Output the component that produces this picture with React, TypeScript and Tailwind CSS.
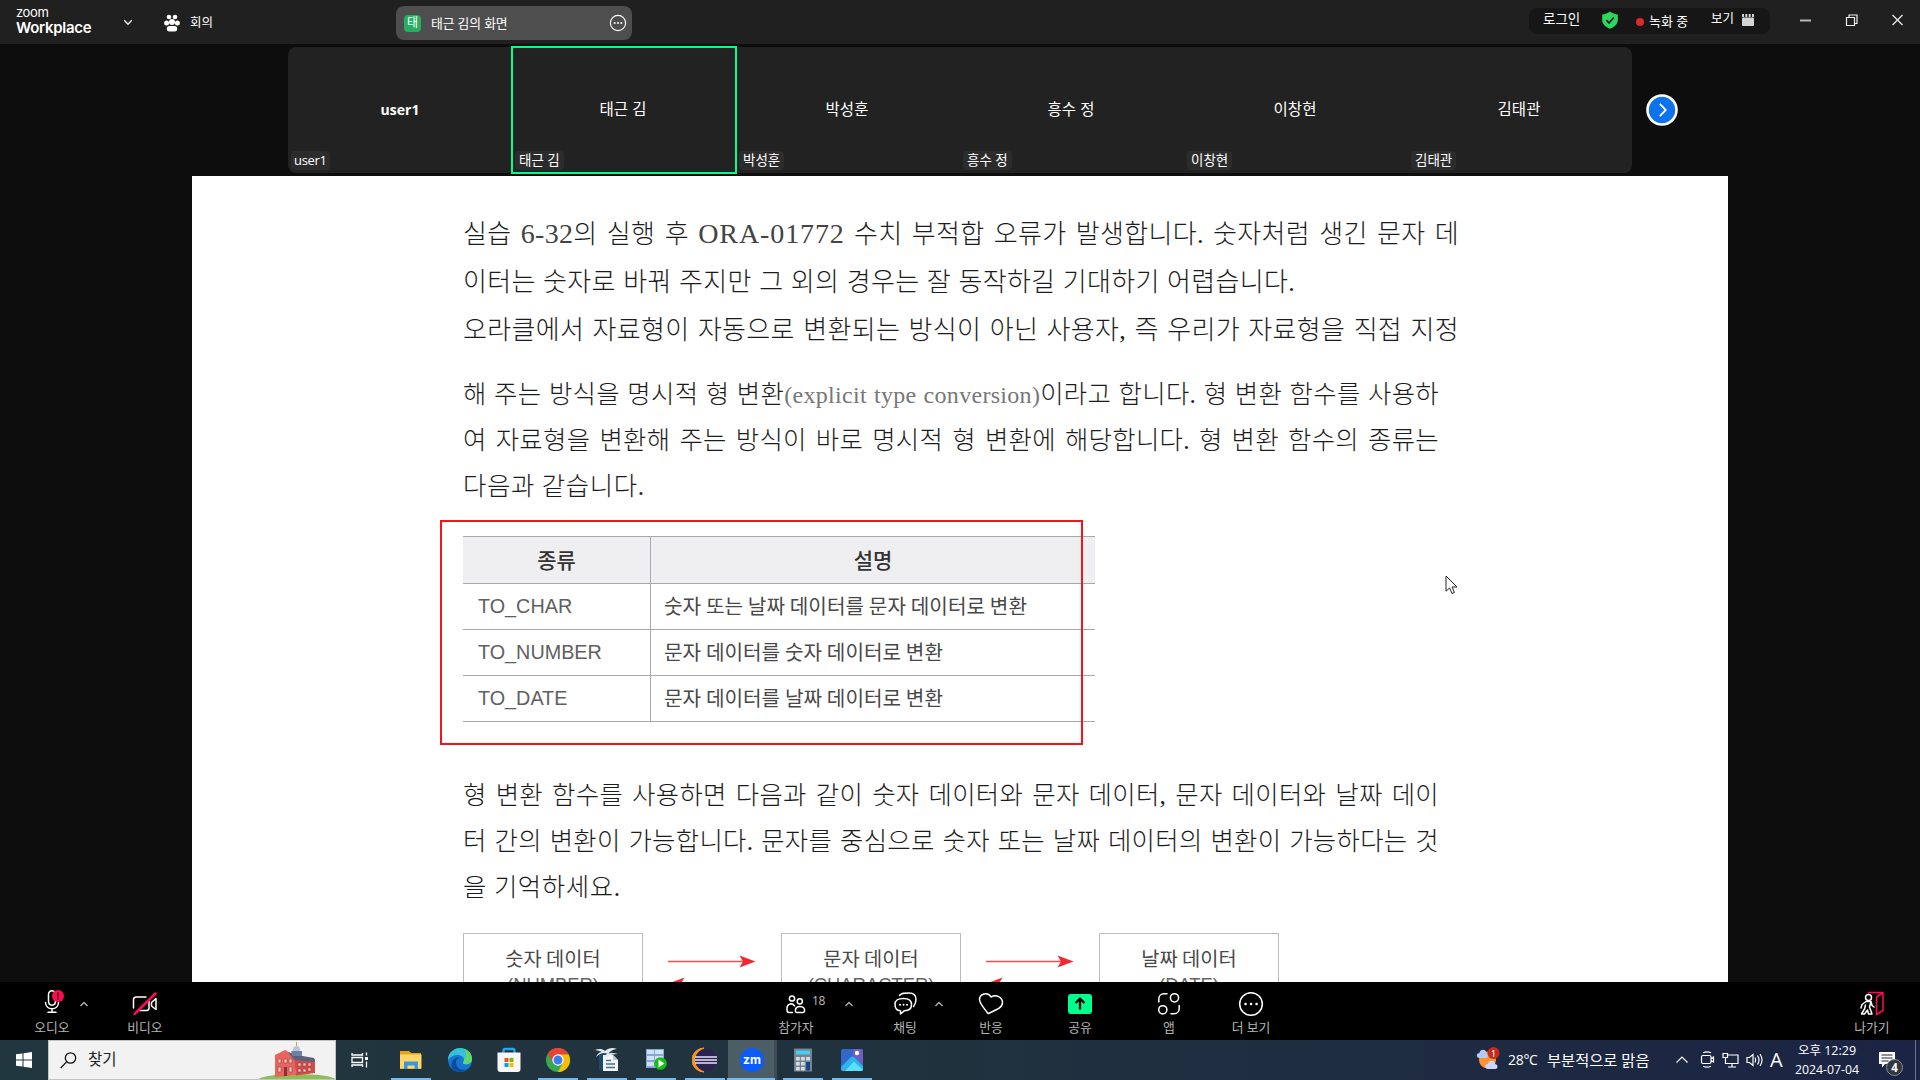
import React from 'react';

const sans = "font-['Open_Sans','Noto_Sans_CJK_KR',sans-serif]";

const participants = [
  { name: 'user1', latin: true, active: false },
  { name: '태근 김', latin: false, active: true },
  { name: '박성훈', latin: false, active: false },
  { name: '흥수 정', latin: false, active: false },
  { name: '이창현', latin: false, active: false },
  { name: '김태관', latin: false, active: false },
];

function TopBar() {
  return (
    <header className="flex h-11 w-full shrink-0 items-start bg-[#202020] text-white">
      <div className="ml-4 mt-[6px] w-[76px] font-['Inter','Liberation_Sans',sans-serif]">
        <div className="text-[13px] leading-[13px] tracking-[-0.4px]">zoom</div>
        <div className="text-[15px] font-semibold leading-[17px] tracking-[-0.3px]">Workplace</div>
      </div>
      <svg className="ml-[31px] mt-[18px]" width="10" height="9" fill="none" stroke="#eee" strokeWidth="1.4">
        <path d="M1.3 2.3 5 6.3 8.7 2.3" />
      </svg>
      <svg className="ml-[31px] mt-[14px]" width="16" height="18" fill="#fff">
        <circle cx="5" cy="3" r="2.3" />
        <circle cx="11" cy="3" r="2.3" />
        <circle cx="2.6" cy="9" r="2.5" />
        <circle cx="13.4" cy="9" r="2.5" />
        <circle cx="8" cy="8" r="3" />
        <rect x="2.8" y="12" width="10.4" height="5.5" rx="2.7" />
      </svg>
      <span className="ml-[10px] mr-px mt-[13px] w-6 text-[12.5px] leading-5">회의</span>
      <div className="ml-[181px] mt-[6px] flex h-[34px] w-[236px] items-center rounded-lg bg-[#4e4e4e] pl-2 pr-[5px]">
        <div className="flex h-[17px] w-[17px] items-center justify-center rounded bg-[#27ae60] text-[12px] leading-none">태</div>
        <span className="ml-[10px] flex-1 text-[12.8px] leading-5 tracking-[-0.1px]">태근 김의 화면</span>
        <svg width="18" height="18" fill="none" stroke="#fff" strokeWidth="1.1">
          <circle cx="9" cy="9" r="7.6" />
          <g fill="#fff" stroke="none">
            <circle cx="5.7" cy="9" r="1" />
            <circle cx="9" cy="9" r="1" />
            <circle cx="12.3" cy="9" r="1" />
          </g>
        </svg>
      </div>
      <div className="ml-auto mt-2 flex h-[26px] w-[241px] items-start rounded-lg bg-[#161616] pl-[14px]">
        <span className="mt-[1px] w-[42px] text-[13.5px] leading-5">로그인</span>
        <svg className="ml-[16px] mt-[3px]" width="18" height="18">
          <path d="M9 .5C11.500 2.500 14 3.200 16.800 3.400V9C16.800 13 13.500 16 9 17.700 4.500 16 1.200 13 1.200 9V3.400C4 3.200 6.500 2.500 9 .5Z" fill="#2bd95a" />
          <path d="M5.300 9.200 8 11.900 12.800 6.500" fill="none" stroke="#123" strokeWidth="1.7" />
        </svg>
        <span className="ml-[17px] mt-[10px] h-2 w-2 rounded-full bg-[#e02828]" />
        <span className="ml-[5px] mt-[3px] w-[48px] whitespace-nowrap text-[13px] leading-5">녹화 중</span>
        <span className="ml-[14px] mt-[1px] w-[24px] text-[12.5px] leading-5">보기</span>
        <svg className="ml-[7px] mt-[6px]" width="12" height="12" fill="#d4d4d4">
          <path d="M0 0h2v3H0zM3.300 0h2v3h-2zM6.700 0h2v3h-2zM10 0h2v3h-2z" />
          <rect y="3.500" width="12" height="8.500" rx="1" />
        </svg>
      </div>
      <svg className="ml-[24px] mr-[10px] mt-[12px]" width="116" height="16" fill="none" stroke="#eee" strokeWidth="1.2">
        <path d="M6 8.500h11" stroke="#b8b8b8" strokeWidth="2" />
        <path d="M52.500 5.500h8v8h-8zM55 5.500v-2.500h8v8.500h-2.500" />
        <path d="M98.500 3 108.500 13M108.500 3 98.500 13" />
      </svg>
    </header>
  );
}

function Strip() {
  return (
    <section className="flex h-[132px] shrink-0 items-start pl-[288px] pt-[3px] text-white">
      <div className="flex h-[126px] w-[1344px] rounded-lg bg-[#222]">
        {participants.map((p) => (
          <div
            key={p.name}
            className={
              p.active
                ? '-m-[1px] flex h-[128px] w-[226px] flex-col border-2 border-[#00ff8c] px-[2px]'
                : 'flex h-[126px] w-[224px] flex-col px-[3px] py-[1px]'
            }
          >
            <div
              className={
                p.latin
                  ? 'mt-[50px] text-center text-[14px] font-bold leading-6'
                  : p.active
                    ? '-ml-[2px] mt-[49px] text-center text-[15.5px] leading-6'
                    : '-ml-[2px] mt-[49px] text-center text-[15.5px] leading-6'
              }
            >
              {p.name}
            </div>
            <div
              className={
                p.latin
                  ? 'mb-[2px] mt-auto w-fit rounded bg-[#2c2c2c] px-[3px] text-[13px] leading-[19px] tracking-[-0.3px]'
                  : 'mb-[2px] mt-auto w-fit whitespace-nowrap rounded bg-[#2c2c2c] px-[4px] text-[13.5px] leading-[19px]'
              }
            >
              {p.name}
            </div>
          </div>
        ))}
      </div>
      <svg className="ml-[13px] mt-[46px]" width="34" height="34" fill="none">
        <circle cx="17" cy="17" r="14.500" fill="#0e72ed" stroke="#fff" strokeWidth="2.600" />
        <path d="M14.800 10.800 20.800 17 14.800 23.200" stroke="#fff" strokeWidth="1.800" />
      </svg>
    </section>
  );
}

const line = 'whitespace-nowrap [text-align-last:justify] text-justify';

const rows = [
  ['TO_CHAR', '숫자 또는 날짜 데이터를 문자 데이터로 변환', 'w-[363px]'],
  ['TO_NUMBER', '문자 데이터를 숫자 데이터로 변환', 'w-[279px]'],
  ['TO_DATE', '문자 데이터를 날짜 데이터로 변환', 'w-[279px]'],
];

function Arrows() {
  return (
    <svg className="mt-[20px]" width="96" height="36" fill="none">
      <path d="M4 8.500H80" stroke="#f0504c" strokeWidth="1.700" />
      <path d="M91.500 8.500 75.500 2.500 79 8.500 75.500 14.500Z" fill="#ee2a30" />
      <path d="M16 30.500H92" stroke="#f0504c" strokeWidth="1.700" />
      <path d="M4.500 30.500 20.500 24.500 17 30.500 20.500 36.500Z" fill="#ee2a30" />
    </svg>
  );
}

function Box({ title, type }: { title: string; type: string }) {
  return (
    <div className="h-[90px] w-[180px] shrink-0 border-[1.500px] border-[#bcbcc2] pt-[10px] text-center font-['Noto_Sans_CJK_KR',sans-serif] text-[19.800px] font-normal text-[#484848]">
      <div className="leading-[27px]">{title}</div>
      <div className="font-['Liberation_Sans',sans-serif] text-[18.400px] leading-[27px] text-[#666]">{type}</div>
    </div>
  );
}

function Slide() {
  return (
    <main className="relative ml-[192px] h-[806px] w-[1536px] shrink-0 overflow-hidden bg-white pl-[271px] font-['Liberation_Serif','Noto_Sans_CJK_KR',serif] text-[26px] font-light tracking-[0.300px] text-[#1c1c1c]">
      <div className="mt-[35px] leading-[48px]">
        <p className={`w-[996px] ${line}`}>
          실습 <span className="text-[28px] leading-none text-[#444]">6-32</span>의 실행 후{' '}
          <span className="text-[28px] leading-none tracking-[0.900px] text-[#444]">ORA-01772</span> 수치 부적합 오류가 발생합니다. 숫자처럼 생긴 문자 데
        </p>
        <p className={`w-[832px] ${line}`}>이터는 숫자로 바꿔 주지만 그 외의 경우는 잘 동작하길 기대하기 어렵습니다.</p>
        <p className={`w-[996px] ${line}`}>오라클에서 자료형이 자동으로 변환되는 방식이 아닌 사용자, 즉 우리가 자료형을 직접 지정</p>
      </div>
      <div className="mt-[16px] text-[25.4px] leading-[46px]">
        <p className={`w-[976px] ${line}`}>
          해 주는 방식을 명시적 형 변환<span className="text-[24px] leading-none text-[#777]">(explicit type conversion)</span>이라고 합니다. 형 변환 함수를 사용하
        </p>
        <p className={`w-[976px] ${line}`}>여 자료형을 변환해 주는 방식이 바로 명시적 형 변환에 해당합니다. 형 변환 함수의 종류는</p>
        <p className={`w-[181px] tracking-[0.600px] ${line}`}>다음과 같습니다.</p>
      </div>
      <div className="mt-[27px] w-[632px] border-t-[1.500px] border-[#a8a8ac] font-['Noto_Sans_CJK_KR',sans-serif] text-[20.200px] tracking-normal text-[#484848]">
        <div className="flex h-[47px] items-center border-b border-[#a8a8ac] bg-[#efeff1] text-[21px] font-medium text-[#333]">
          <div className="flex h-full w-[188px] items-center justify-center border-r border-[#a8a8ac]">종류</div>
          <div className="flex-1 text-center">설명</div>
        </div>
        {rows.map(([name, text, width]) => (
          <div key={name} className="flex h-[46px] items-center border-b border-[#a8a8ac]">
            <div className="flex h-full w-[188px] items-center border-r border-[#a8a8ac] pl-[15px] font-['Liberation_Sans',sans-serif] text-[19.800px] text-[#606060]">{name}</div>
            <div className={`ml-[13px] font-normal ${width} ${line}`}>{text}</div>
          </div>
        ))}
      </div>
      <div className="mt-[50px] text-[25.400px] leading-[46px]">
        <p className={`w-[976px] ${line}`}>형 변환 함수를 사용하면 다음과 같이 숫자 데이터와 문자 데이터, 문자 데이터와 날짜 데이</p>
        <p className={`w-[976px] ${line}`}>터 간의 변환이 가능합니다. 문자를 중심으로 숫자 또는 날짜 데이터의 변환이 가능하다는 것</p>
        <p className={`w-[157px] tracking-[0.600px] ${line}`}>을 기억하세요.</p>
      </div>
      <div className="mt-[23px] flex w-[816px] items-start justify-between tracking-normal">
        <Box title="숫자 데이터" type="(NUMBER)" />
        <Arrows />
        <Box title="문자 데이터" type="(CHARACTER)" />
        <Arrows />
        <Box title="날짜 데이터" type="(DATE)" />
      </div>
      <div className="absolute left-[248px] top-[344px] h-[225px] w-[643px] border-2 border-[#f5141c]" />
      <svg className="absolute left-[1253px] top-[399px]" width="14" height="20">
        <path d="M1 1V16.200L4.600 13 7 18.500 9.400 17.500 7.100 12H12Z" fill="#fff" stroke="#222" strokeWidth="1" />
      </svg>
    </main>
  );
}

function Tool({ label, children, className }: { label: string; children: React.ReactNode; className: string }) {
  return (
    <div className={`flex w-[60px] shrink-0 flex-col items-center ${className}`}>
      <svg className="mt-[8px]" width="32" height="28" fill="none" stroke="#fff" strokeWidth="1.500" strokeLinecap="round" strokeLinejoin="round">
        {children}
      </svg>
      <span className="whitespace-nowrap text-[12.800px] leading-[18px] text-[#b4b4b4]">{label}</span>
    </div>
  );
}

function Caret({ className }: { className: string }) {
  return (
    <svg className={`mt-[18px] shrink-0 ${className}`} width="10" height="8" fill="none" stroke="#aaa" strokeWidth="1.500">
      <path d="M1.500 6 5 2.500 8.500 6" />
    </svg>
  );
}

function Toolbar() {
  return (
    <nav className="flex h-[58px] shrink-0 items-start bg-black">
      <Tool label="오디오" className="ml-[22px]">
        <path d="M18 1.500C14.500-.5 12.500 2 12.500 4.500V11C12.500 16.500 19.500 16.500 19.500 11V8M9.500 12.500C9.500 20.800 22.500 20.800 22.500 12.500M16 18.800V22M12 22.300H20" />
        <circle cx="22" cy="6" r="6" fill="#ff0a54" stroke="none" />
        <path d="M22 3V6.500M22 8.600V8.900" stroke="#400" strokeWidth="1.700" />
      </Tool>
      <Caret className="-ml-[3px]" />
      <Tool label="비디오" className="ml-[26px]">
        <path d="M17 7H7.500C5.500 7 4.500 8 4.500 9.500V18M9 20.500H17.500C19 20.500 20 19.500 20 18V11M22.500 12.500 27 8.500V19.500L22.500 16Z" />
        <path d="M5.500 24 26.500 3.500" stroke="#ff0a54" strokeWidth="2.500" />
      </Tool>
      <Tool label="참가자" className="ml-[591px]">
        <circle cx="12" cy="8.500" r="2.600" />
        <circle cx="19.800" cy="11.300" r="2.600" />
        <path d="M12.500 22.500H9C7.500 22.500 7 21.500 7 20V18.500C7 13.500 13 12.500 14.500 16M17 22.500C14.500 22.500 14.500 16.500 19.800 16.500 25.500 16.500 25.500 22.500 23 22.500Z" />
      </Tool>
      <span className="-ml-[14px] mt-[12px] w-[14px] font-['Noto_Sans',sans-serif] text-[12px] leading-[14px] tracking-[-0.300px] text-[#b4b4b4]">18</span>
      <Caret className="ml-[18px]" />
      <Tool label="채팅" className="ml-[21px]">
        <path d="M10.500 5.500C12.500 3 15 3 20 3 25 3 27 5.500 27 9.500 27 12.500 26.500 14 24.500 16.500M14.500 8.500C8.500 8.500 6 10 6 14.500 6 18.500 8 20.500 11.500 20.700V24L15.500 20.700C20.500 20.700 22.500 18.500 22.500 14.500 22.500 10 20 8.500 14.500 8.500Z" />
        <path d="M11 14.800h.1M14.500 14.800h.1M18 14.800h.1" strokeWidth="1.900" />
      </Tool>
      <Caret className="-ml-[1px]" />
      <Tool label="반응" className="ml-[17px]">
        <path d="M13 23.500C9.500 18.500 5 14.500 4.500 9.500 4.500 3.500 13 1.500 16 7 21 4 27.500 7 27.500 12.500 27.500 18.500 19.500 20.500 13 23.500Z" />
      </Tool>
      <Tool label="공유" className="ml-[29px]">
        <rect x="4" y="4" width="24" height="20" rx="3" fill="#00ff8c" stroke="none" />
        <path d="M16 19.500V9M11.500 13 16 8.600 20.500 13" stroke="#000" strokeWidth="2.300" strokeLinecap="butt" strokeLinejoin="miter" />
      </Tool>
      <Tool label="앱" className="ml-[29px]">
        <circle cx="21.500" cy="7.800" r="4.100" />
        <circle cx="9.800" cy="19.800" r="4.100" />
        <path d="M14 3.800H11C8 3.800 5.800 6 5.800 9V12M18 23.800H21C24 23.800 26.200 21.500 26.200 18.500V15.500" />
      </Tool>
      <Tool label="더 보기" className="ml-[22px]">
        <circle cx="16" cy="14" r="11.300" />
        <path d="M10.500 14h.1M16 14h.1M21.500 14h.1" strokeWidth="2.500" />
      </Tool>
      <Tool label="나가기" className="ml-auto mr-[18px]">
        <circle cx="12.500" cy="7.500" r="3" />
        <path d="M10 11.500 6 14.500 5 18M10 11.500H15L16 15.500 18 17M9.500 15 8.500 19 5.500 24M15 11.500 13.500 17 16 24H12.500L11.500 20 8.500 24H5.500" />
        <path d="M12.500 2.500H27V20.500L20.500 24.500V7L27 3" stroke="#ff0a54" />
      </Tool>
    </nav>
  );
}

function Task({ children, on, active, className = '' }: { children: React.ReactNode; on?: boolean; active?: boolean; className?: string }) {
  return (
    <div className={`flex h-10 w-[49px] shrink-0 flex-col items-center ${active ? 'border-r-[3px] border-[#3c4b54] bg-[#4b5d66]' : ''} ${className}`}>
      <svg className="mt-[7px] shrink-0" width="26" height="26">{children}</svg>
      {on && <div className={`mt-auto h-[2px] shrink-0 bg-[#76b9ed] ${active ? 'w-[48px]' : 'w-10'}`} />}
    </div>
  );
}

function Taskbar() {
  return (
    <footer className="flex h-10 shrink-0 items-start bg-gradient-to-r from-[#21373f] via-[#20313e] to-[#1b2444] text-white">
      <div className="flex h-10 w-12 items-center justify-center">
        <svg width="16" height="16" fill="#fff">
          <path d="M0 2.300 6.500 1.400V7.500H0zM7.500 1.200 16 0V7.500H7.500zM0 8.500H6.500V14.600L0 13.700zM7.500 8.500H16V16L7.500 14.800z" />
        </svg>
      </div>
      <div className="flex h-10 w-[288px] items-center border border-[#c4c4c4] bg-[#f2f2f2]">
        <svg className="ml-[11px]" width="17" height="17" fill="none" stroke="#111" strokeWidth="1.300">
          <circle cx="10.500" cy="6" r="5.200" />
          <path d="M6.600 9.900.7 16" />
        </svg>
        <span className="ml-[11px] text-[15.500px] text-[#222]">찾기</span>
        <svg className="ml-auto self-end" width="78" height="38">
          <ellipse cx="40" cy="39" rx="39" ry="6" fill="#8cc152" />
          <path d="M18 14 28 9 37 14 39 34 18 36Z" fill="#e8645c" />
          <path d="M37 18H58V32L39 34.500Z" fill="#d14c4c" />
          <path d="M31 11 40 14 57 17 58 21 37 19Z" fill="#5a6378" />
          <path d="M36 8C36 4 43 4 43 8V14H35Z" fill="#b8c5da" />
          <path d="M39.500 5V1" stroke="#c8a050" />
          <path d="M34 10h11v5h-9z" fill="#6f7f9f" />
          <path d="M21 18h3v4h-3zM27 18h3v4h-3zM32 18h3v4h-3zM21 26h3v5h-3zM32 26h3v5h-3zM41 22h3v3h-3zM46 22h3v3h-3zM51 22h3v3h-3zM41 28h3v3h-3zM46 28h3v3h-3zM51 27h3v3h-3z" fill="#f0c4b8" stroke="#8a3038" strokeWidth=".5" />
          <path d="M27 26h3v9h-3z" fill="#8a3038" />
        </svg>
      </div>
      <Task className="-ml-px">
        <path d="M5 6v2h10.500V6M5 20v-2h10.500v2M5 10.500h10.500v5H5zM19.500 5.500v3M19.500 14.500v6" fill="none" stroke="#fff" strokeWidth="1.300" />
        <path d="M18 10h3v3h-3z" fill="#fff" />
      </Task>
      <Task on className="ml-[2px]">
        <path d="M2 4h9l2 2h10v16H2z" fill="#e8a317" />
        <path d="M2 7.500h21.500V21.500H2z" fill="#ffd667" />
        <path d="M6 22v-7.500h14V22h-3.500v-3.500h-7V22z" fill="#3a96dd" />
      </Task>
      <Task>
        <circle cx="13" cy="13" r="12" fill="#1576cf" />
        <path d="M1 13C1 4 9 1 13 1 20 1 25 6 25 12 25 16 21 18 17 17 15 16.500 17 15 17 12.500 16 7 6 6 1 13Z" fill="#35c2d8" />
        <path d="M17 1.700C22 3 25 7.500 25 12 25 16 21 18 17 17 15 16.500 17 15 17 12.500 19 10 20 5 17 1.700Z" fill="#62d66c" />
        <path d="M9 15C9 21 14 24 20 22.500 16 26 9 26 5 21 3 15 8 9 13 11 10 11.500 9 13 9 15Z" fill="#0c4a9c" />
      </Task>
      <Task>
        <path d="M7.500 6V3.500Q7.500 2 9 2H17Q18.500 2 18.500 3.500V6" fill="none" stroke="#25a8e8" strokeWidth="2.300" />
        <path d="M1.500 5.500h23V22q0 3-3 3h-17q-3 0-3-3z" fill="#f7f7f7" />
        <path d="M8.500 11h4v4h-4z" fill="#f25022" />
        <path d="M13.500 11h4v4h-4z" fill="#7fba00" />
        <path d="M8.500 16h4v4h-4z" fill="#00a4ef" />
        <path d="M13.500 16h4v4h-4z" fill="#ffb900" />
      </Task>
      <Task on>
        <circle cx="13" cy="13" r="12" fill="#34a853" />
        <path d="M13 13 2.600 7A12 12 0 0 1 23.400 7Z" fill="#ea4335" />
        <path d="M13 7.500H23.700A12 12 0 0 1 13 25L18 15.500Z" fill="#fbbc05" />
        <path d="M2.600 7 8.300 16 13 8Z" fill="#ea4335" />
        <circle cx="13" cy="13" r="5.700" fill="#fff" />
        <circle cx="13" cy="13" r="4.500" fill="#3e7df0" />
      </Task>
      <Task on>
        <path d="M5 4h14v19H5z" fill="#1d4a6b" />
        <path d="M9 8h10l5 5v11H9z" fill="#f2f6f9" />
        <path d="M19 8v5h5z" fill="#b4c8d6" />
        <path d="M12 13.500h5M12 17h9M12 20.500h9" stroke="#456f91" strokeWidth="1.600" />
        <path d="M1 3C5 1.500 8 1.500 11 4 15 .5 19 .5 23 2 19 2.500 16 4 14 7 10 5 6 6 2 10 3.500 6.500 5.500 5 8 5 6 3.800 3.500 3.800 1 3ZM9 10C13 5.500 18 5 24 7 19 7 15.500 8 13 10.500Z" fill="#e4eaee" />
      </Task>
      <Task on>
        <path d="M3 2h18v19H3z" fill="#87a8d6" />
        <path d="M4 3h7v4H4zM12 3h8v4h-8zM4 9h7v4H4zM12 9h8v4h-8zM4 15h7v4H4z" fill="#d2e1f4" />
        <circle cx="17.500" cy="16.500" r="6.300" fill="#14bf14" />
        <path d="M15.500 12.500 21.500 16.500 15.500 20.500Z" fill="#fff" />
      </Task>
      <Task on>
        <path d="M12 1A12 12 0 0 0 12 25 13.500 13.500 0 0 1 12 1Z" fill="#f7941e" stroke="#f7941e" />
        <circle cx="14" cy="13" r="11" fill="#2c2255" />
        <path d="M3 10h22M3 13h22M3 16h22" stroke="#e8e6f2" strokeWidth="1.500" />
      </Task>
      <Task on active className="-ml-[1px]">
        <circle cx="14" cy="13" r="12" fill="#0b5cff" />
        <text x="14" y="17" textAnchor="middle" fill="#fff" fontFamily="Inter" fontSize="12" fontWeight="700">zm</text>
      </Task>
      <Task on className="ml-px">
        <path d="M4 1.500h18v23H4z" fill="#76848f" />
        <path d="M6 3.500h14v4H6z" fill="#45cdf5" />
        <path d="M6 10h3.800v3.500H6zM11 10h3.800v3.500H11zM16.200 10H20v3.500h-3.800zM6 15h3.800v3.500H6zM11 15h3.800v3.500H11zM6 20h3.800v3.500H6zM11 20h3.800v3.500H11z" fill="#d3dae0" />
        <path d="M16.200 15H20v8.500h-3.800z" fill="#12448c" />
      </Task>
      <Task on>
        <rect x="2" y="2" width="22" height="22" rx="2" fill="#3566c9" />
        <path d="M14 2h8q2 0 2 2v14L14 9Z" fill="#6d5fc0" />
        <path d="M2 20 12 10Q13.500 8.800 15 10L24 19V22q0 2-2 2H4Q2 24 2 22Z" fill="#2bb4ee" />
        <path d="M6 24 15 14.500 24 23Q23 24 22 24Z" fill="#5fe0fa" />
        <circle cx="18" cy="6" r="2.200" fill="#fff" />
      </Task>
      <svg className="ml-auto mt-[7px]" width="25" height="24">
        <circle cx="11.500" cy="13" r="8.500" fill="#ff9430" />
        <path d="M3.500 11C0 11 0 6 3.500 6 4 1 11 2 10.500 6.500 13 8 12 11 10 11Z" fill="#b9c9f7" />
        <path d="M11.500 22C8 21 8.500 17 12 17 13 12.500 19 13 19 17 22.500 17.500 22 22 19.500 22Z" fill="#ccd6fa" />
        <circle cx="17.500" cy="6" r="6" fill="#c42b1c" />
        <text x="17.500" y="9.500" textAnchor="middle" fill="#fff" fontFamily="Noto Sans" fontSize="9.500">1</text>
      </svg>
      <span className="ml-[7px] mt-[10px] w-[32px] whitespace-nowrap text-[14px] leading-5 tracking-[-0.300px]">28°C</span>
      <span className="ml-[7px] mt-[10px] w-[105px] whitespace-nowrap text-[15.300px] leading-5">부분적으로 맑음</span>
      <svg className="ml-[22px] mt-[10px]" width="96" height="20" fill="none" stroke="#fff" strokeWidth="1.200">
        <path d="M2.500 12.500 8 7 13.500 12.500" />
        <path d="M29 5.500h6.500q1.500 0 1.500 1.500v5q0 1.500-1.500 1.500h-6.500q-1.500 0-1.500-1.500V7q0-1.500 1.500-1.500zM29 2.800q4-2 8 0M29 16.200q4 2 8 0M37 8.500l2.500-1.500v5l-2.500-1.500" />
        <path d="M53 5h11v8.500H51.500V9M49 3.500h4.500v4H49zM51.500 7.500V9M58 13.500V17M54 17h8" />
        <path d="M73 7.500h2.500L79 4.500v11L75.500 12.500H73zM81 7.500q1.500 2.500 0 5M83.500 5.500q3 4.500 0 9M86 4q4 6 0 12" />
      </svg>
      <span className="ml-0 mt-[10px] w-[16px] text-[20px] leading-5">A</span>
      <div className="ml-[2px] w-[78px] whitespace-nowrap pt-[2px] text-center text-[12.500px] leading-[18px]">
        <div>오후 12:29</div>
        <div className="pt-px text-[12.300px]">2024-07-04</div>
      </div>
      <svg className="ml-[13px] mt-[11px]" width="26" height="26">
        <path d="M0 1h16v12H6l-3 3.500V13H0z" fill="#fff" />
        <path d="M2.500 4h11M2.500 7h11M2.500 10h7" stroke="#223" strokeWidth="1.100" />
        <circle cx="15.500" cy="16.500" r="8" fill="#32363f" stroke="#8a8d94" strokeWidth="1" />
        <text x="15.500" y="20.800" textAnchor="middle" fill="#fff" fontFamily="Noto Sans" fontSize="11.500" fontWeight="700">4</text>
      </svg>
      <div className="ml-[10px] mr-[4px] h-10 w-px bg-[#6d7588]" />
    </footer>
  );
}

export default function App() {
  return (
    <div className={`flex h-[1080px] w-[1920px] flex-col overflow-hidden bg-[#0d0d0d] ${sans}`}>
      <TopBar />
      <Strip />
      <Slide />
      <Toolbar />
      <Taskbar />
    </div>
  );
}
